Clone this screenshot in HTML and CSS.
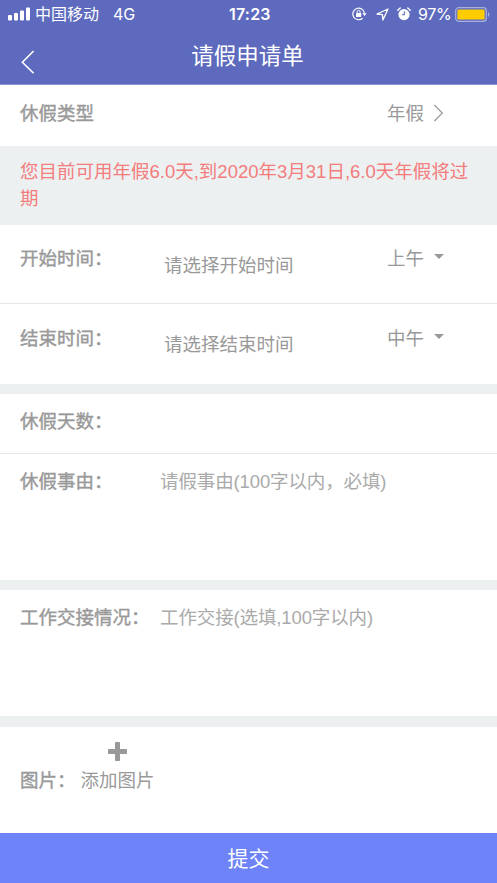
FILE: index.html
```html
<!DOCTYPE html>
<html lang="zh-CN">
<head>
<meta charset="utf-8">
<title>请假申请单</title>
<link rel="stylesheet" href="styles.css">
</head>
<body>
<header class="header">
  <div class="status">
    <svg class="signal" width="23" height="14" viewBox="0 0 23 14" fill="#fff"><rect x="0" y="8" width="4" height="5.5" rx="1"/><rect x="6" y="6" width="4" height="7.5" rx="1"/><rect x="12" y="3.5" width="4" height="10" rx="1"/><rect x="18" y="0.5" width="4" height="13" rx="1"/></svg>
    <span class="carrier">中国移动</span>
    <span class="network">4G</span>
    <span class="clock">17:23</span>
    <svg class="lock" width="15" height="14" viewBox="0 0 15 14" fill="none" stroke="#fff" stroke-width="1.2"><path d="M10.6 11.2A5.8 5.8 0 1 1 12.4 6.2"/><path d="M10.2 6.2h4.5l-2.2 2.8z" fill="#fff" stroke="none"/><rect x="4" y="6" width="5.2" height="4" rx=".6" fill="#fff" stroke="none"/><path d="M5.1 6V4.9a1.5 1.5 0 0 1 3 0V6" stroke-width="1"/></svg>
    <svg class="arrow" width="13" height="13" viewBox="0 0 13 13" fill="none" stroke="#fff" stroke-width="1.3" stroke-linejoin="round"><path d="M12 1 1 6l5.4.6.5 5.4z"/></svg>
    <svg class="alarm" width="14" height="14" viewBox="0 0 14 14"><circle cx="7" cy="7.6" r="5.6" fill="#fff"/><path d="M.8 3.2 3.2 1M13.2 3.2 10.8 1" stroke="#fff" stroke-width="1.5" stroke-linecap="round"/><path d="M7.3 4.3v3.5H4.8" fill="none" stroke="#5d6abe" stroke-width="1.1"/></svg>
    <span class="percent">97%</span>
    <svg class="battery" width="35" height="15" viewBox="0 0 35 15"><rect x=".7" y=".7" width="30.6" height="13.6" rx="3" fill="none" stroke="#a9b0de" stroke-width="1.2"/><rect x="2.4" y="2.4" width="27.2" height="10.2" rx="1.4" fill="#fc0"/><path d="M33 5c1.8 1 1.8 4 0 5z" fill="#a9b0de"/></svg>
  </div>
  <div class="nav">
    <svg class="back" width="14" height="24" viewBox="0 0 14 24" fill="none" stroke="#fff" stroke-width="1.6"><path d="M12.6 1 1.4 12.2 12.6 23.2"/></svg>
    <h1 class="title">请假申请单</h1>
  </div>
</header>
<main class="form">
  <section class="row type-row">
    <span class="label">休假类型</span>
    <span class="choice">年假<svg class="chevron" width="11" height="18" viewBox="0 0 11 18" fill="none" stroke="#999" stroke-width="1.2"><path d="M1.4 1 9.3 9 1.4 17"/></svg></span>
  </section>
  <p class="notice">您目前可用年假6.0天,到2020年3月31日,6.0天年假将过期</p>
  <section class="row time-row divided">
    <span class="label">开始时间：</span>
    <span class="picker">请选择开始时间</span>
    <span class="choice">上午<i class="caret"></i></span>
  </section>
  <section class="row time-row end-row">
    <span class="label">结束时间：</span>
    <span class="picker">请选择结束时间</span>
    <span class="choice">中午<i class="caret"></i></span>
  </section>
  <section class="row days-row group divided">
    <span class="label">休假天数：</span>
  </section>
  <section class="row reason-row">
    <span class="label">休假事由：</span>
    <span class="hint">请假事由(100字以内，必填)</span>
  </section>
  <section class="row handover-row group">
    <span class="label">工作交接情况：</span>
    <span class="hint">工作交接(选填,100字以内)</span>
  </section>
  <section class="row photo-row group">
    <span class="label">图片：</span>
    <span class="upload">
      <svg width="19" height="19" viewBox="0 0 19 19" fill="#999"><rect x="7" width="5" height="19" rx=".8"/><rect y="7" width="19" height="5" rx=".8"/></svg>
      <span>添加图片</span>
    </span>
  </section>
</main>
<div class="submit">提交</div>
</body>
</html>
```

FILE: styles.css
```css
* { box-sizing: border-box; }
body {
  margin: 0;
  height: 883px;
  display: flex;
  flex-direction: column;
  overflow: hidden;
  background: #ecf0f1;
  color: #999;
  font: 18.5px/26.5px "Liberation Sans", "Noto Sans CJK SC", sans-serif;
}
.header {
  flex: none;
  height: 85px;
  background: #5d6abe;
  border-bottom: 1px solid #8d96d0;
  color: #fff;
}
.form { flex: none; }
.status {
  display: flex;
  align-items: center;
  height: 28px;
  padding-left: 8px;
  font: 16px/28px Inter, "Noto Sans CJK SC", sans-serif;
  white-space: nowrap;
}
.status svg { flex: none; }
.carrier { width: 64px; margin-left: 4px; }
.network { width: 22px; margin-left: 14px; }
.clock { width: 44px; margin-left: 94px; font-weight: 600; letter-spacing: 0.2px; }
.lock { margin-left: 79px; }
.arrow { margin-left: 9px; }
.alarm { margin-left: 8px; }
.percent { width: 33px; margin-left: 7px; letter-spacing: -0.3px; }
.battery { margin-left: 4px; }
.nav {
  display: grid;
  grid-template-columns: 14px 1fr 16px;
  padding: 0 21px;
}
.back { margin-top: 22px; }
.title {
  margin: 14px 0 0;
  font-size: 22.5px;
  line-height: 30px;
  font-weight: 400;
  text-align: center;
}
.row {
  display: grid;
  grid-template-columns: 144px 223px 1fr;
  align-items: start;
  padding-left: 20px;
  background: #fff;
}
.divided { border-bottom: 1px solid #e6e8e8; }
.group { margin-top: 10px; }
.label { white-space: nowrap; -webkit-text-stroke: 0.4px #999; }
.choice { grid-column: 3; display: flex; align-items: center; }
.chevron { margin: -3px 0 0 9px; }
.caret {
  margin: -5px 0 0 10px;
  border: 5px solid transparent;
  border-top-color: #999;
  border-bottom: 0;
}
.type-row { height: 61px; padding-top: 16px; }
.notice {
  height: 79px;
  margin: 0;
  padding: 13px 20px 0;
  color: #f47c7c;
}
.time-row { height: 79px; padding-top: 21px; }
.picker { padding-top: 7px; }
.end-row { height: 80px; padding-top: 22px; }
.end-row .picker { padding-top: 6px; }
.days-row { height: 60px; padding-top: 15px; }
.reason-row, .handover-row { grid-template-columns: 140px 1fr; }
.reason-row { height: 126px; padding-top: 15px; }
.handover-row { height: 126px; padding-top: 15px; }
.hint { color: #aaa; letter-spacing: -0.12px; }
.photo-row {
  grid-template-columns: 60px 1fr;
  align-items: end;
  height: 106px;
  margin-top: 11px;
  padding-bottom: 39px;
}
.upload {
  display: flex;
  flex-direction: column;
  align-items: center;
  gap: 7px;
  width: 75px;
}
.submit {
  flex: 1;
  background: #6d83f7;
  color: #fff;
  font-size: 21px;
  line-height: 52px;
  text-align: center;
}
```
